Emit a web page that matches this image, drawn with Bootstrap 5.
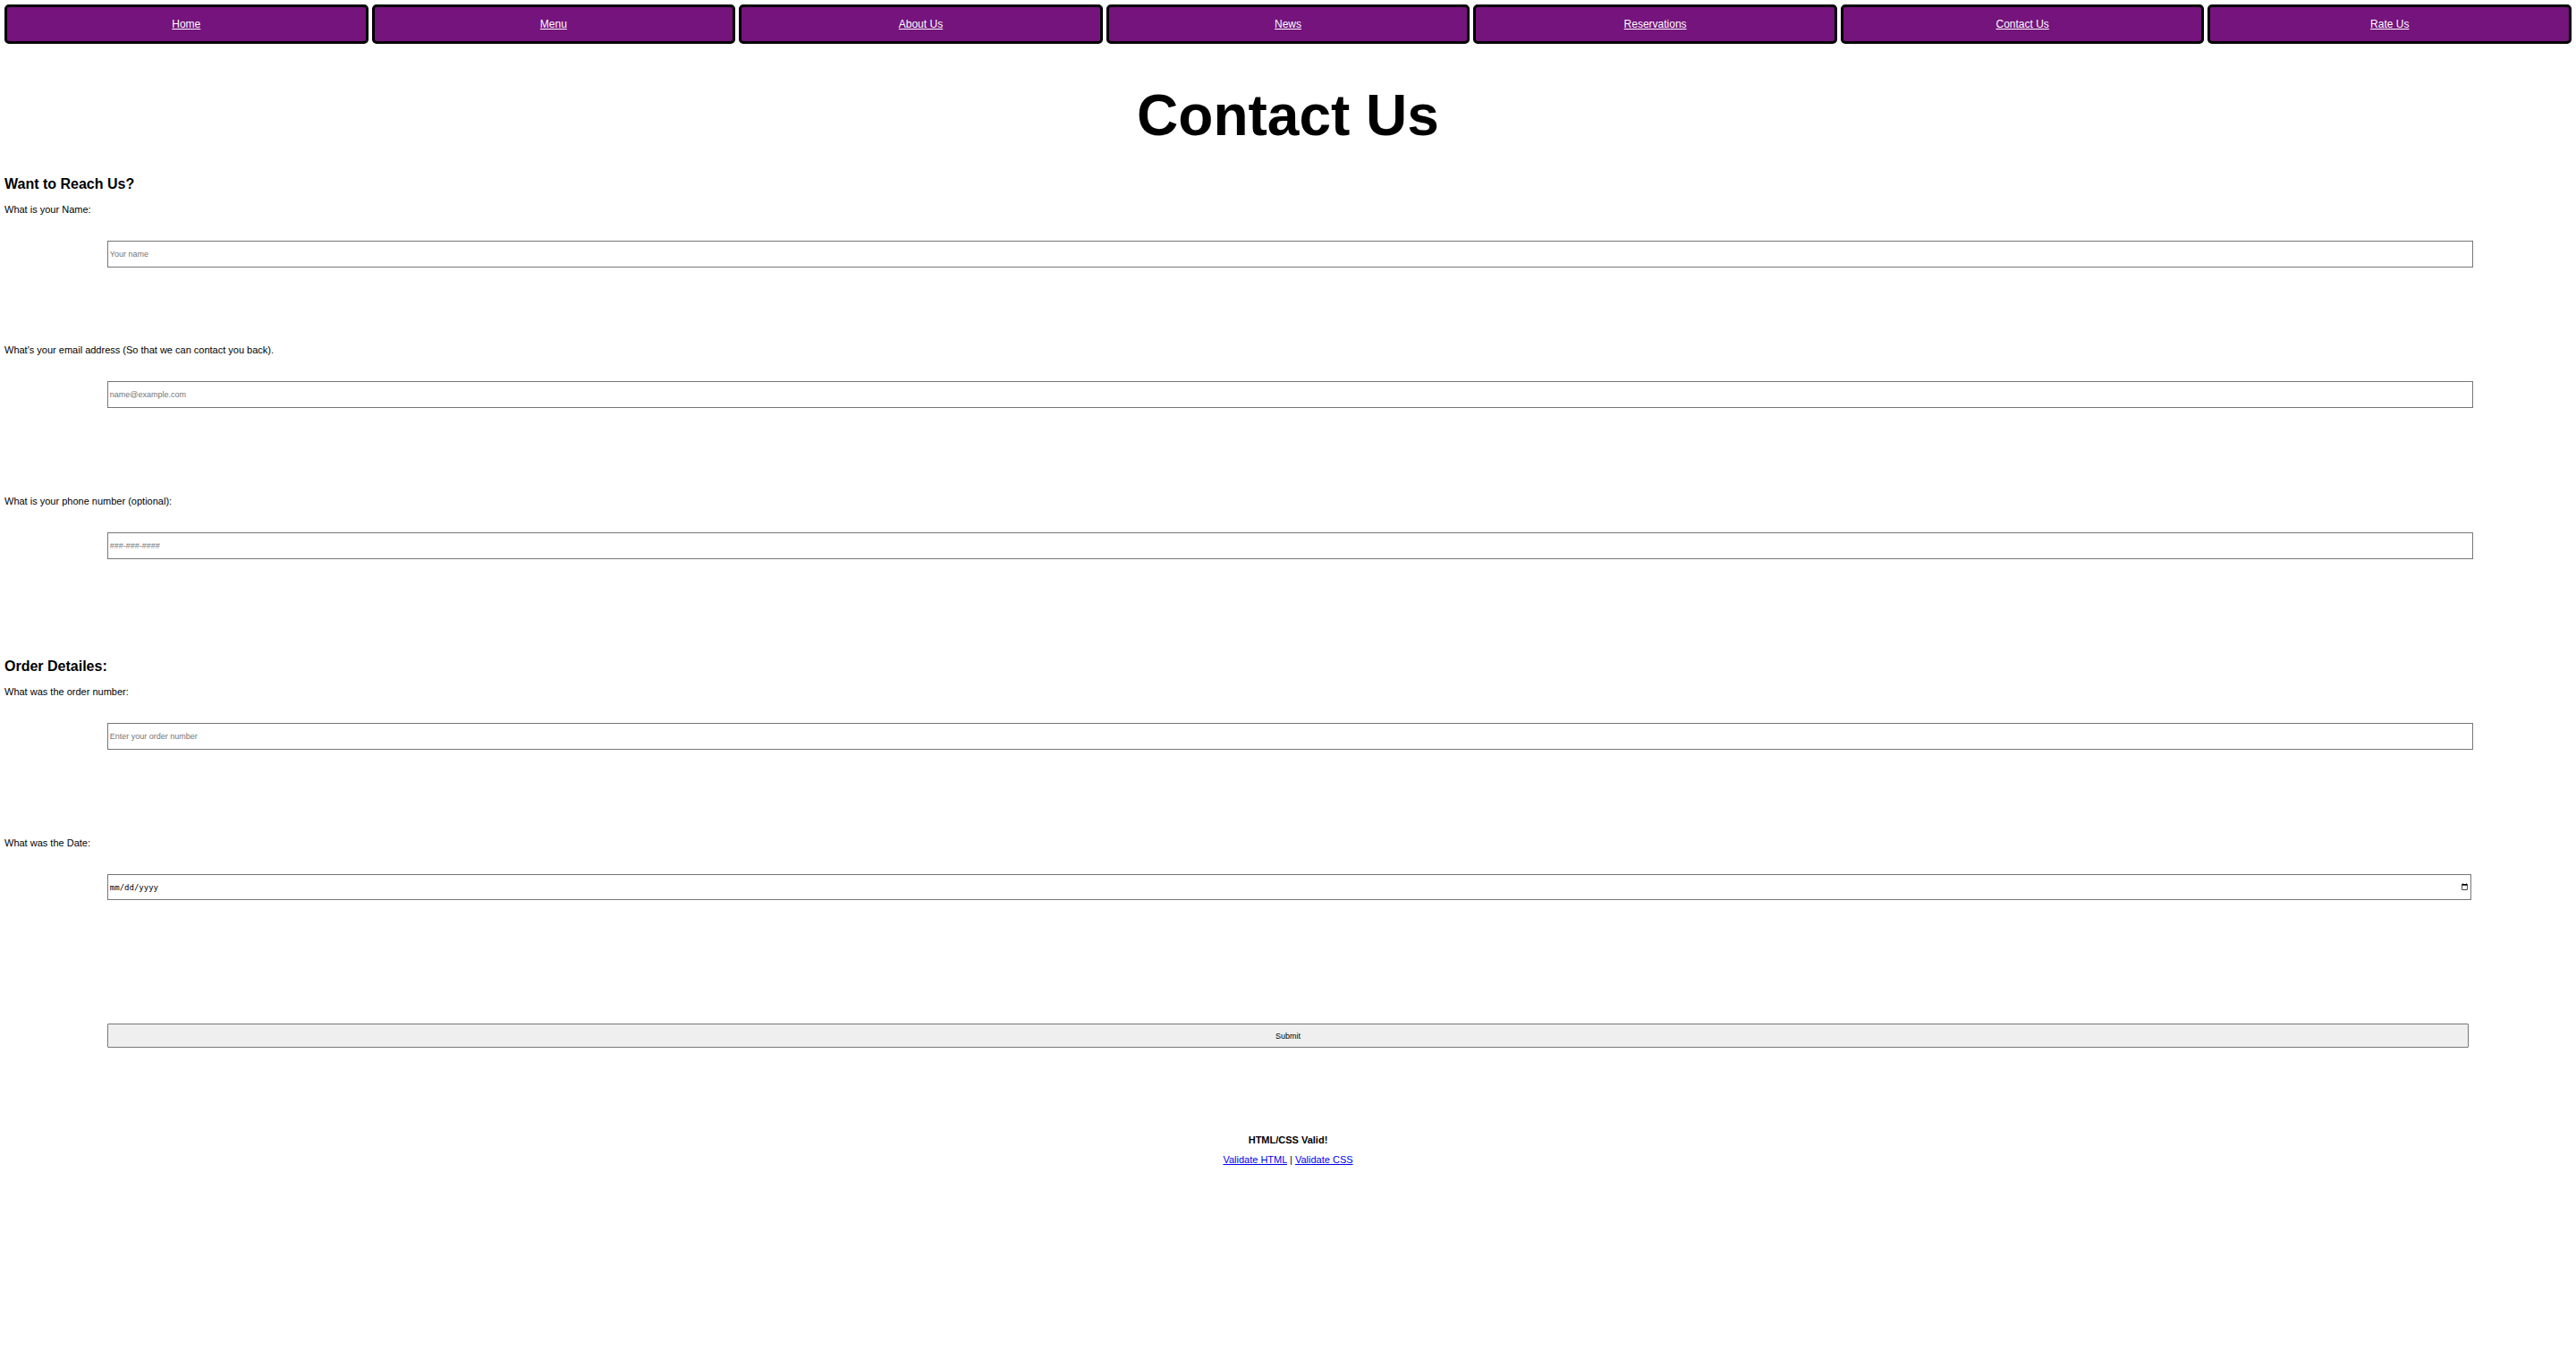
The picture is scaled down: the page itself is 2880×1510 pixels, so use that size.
<!DOCTYPE html>
<html lang="en">
<head>
<meta charset="utf-8">
<meta name="viewport" content="width=device-width, initial-scale=1">
<title>Contact Us</title>
<link href="https://cdn.jsdelivr.net/npm/bootstrap@5.3.0/dist/css/bootstrap.min.css" rel="stylesheet">
<style>
  body { font-family: "Liberation Sans", Arial, sans-serif; font-size: 11px; line-height: 12px; color: #000; background: #fff; padding: 5px; }
  .site-nav { gap: 4px; }
  .site-nav .nav-link { height: 44px; padding: 0; border: 3px solid #000; border-radius: 5px; background: #75147c; color: #fff; font-size: 12px; text-decoration: underline; }
  .page-title { font-size: 64px; line-height: 72px; font-weight: 700; margin: 44px 0 31px; }
  .section-title { font-size: 16px; line-height: 20px; font-weight: 700; margin: 0 0 12px; }
  .field { margin-bottom: 98px; }
  .field-name { margin-bottom: 86px; }
  .field-phone { margin-bottom: 110px; }
  .field-date { margin-bottom: 138px; }
  .field label { display: block; margin-bottom: 29px; }
  .entry { display: block; box-sizing: content-box; width: 92%; height: 28px; margin-left: 4%; padding: 0 1px 0 2px; border: 1px solid #767676; border-radius: 0; background: #fff; color: #000; font-size: 9px; line-height: 12px; }
  .entry::placeholder { color: #757575; opacity: 1; }
  .entry-date { height: 27px; padding: 0 0 0 1px; font-family: "DejaVu Sans Mono", monospace; }
  .entry-date::-webkit-datetime-edit-fields-wrapper { padding: 1px; }
  .send { display: block; width: 92%; height: 27px; margin: 0 0 97px 4%; padding: 0; border: 1px solid #767676; border-radius: 1px; background: #efefef; color: #000; font-size: 9px; line-height: 12px; }
  .site-foot p { margin: 0 0 10px; }
  .site-foot a { color: #0000ee; }
</style>
<script src="https://cdn.jsdelivr.net/npm/bootstrap@5.3.0/dist/js/bootstrap.bundle.min.js" defer></script>
</head>
<body>
<nav class="site-nav nav nav-fill flex-nowrap" aria-label="Main">
  <a class="nav-link flex-fill d-flex align-items-center justify-content-center w-100" href="#">Home</a>
  <a class="nav-link flex-fill d-flex align-items-center justify-content-center w-100" href="#">Menu</a>
  <a class="nav-link flex-fill d-flex align-items-center justify-content-center w-100" href="#">About Us</a>
  <a class="nav-link flex-fill d-flex align-items-center justify-content-center w-100" href="#">News</a>
  <a class="nav-link flex-fill d-flex align-items-center justify-content-center w-100" href="#">Reservations</a>
  <a class="nav-link flex-fill d-flex align-items-center justify-content-center w-100" href="#">Contact Us</a>
  <a class="nav-link flex-fill d-flex align-items-center justify-content-center w-100" href="#">Rate Us</a>
</nav>
<main>
  <h1 class="page-title text-center">Contact Us</h1>
  <form>
    <h2 class="section-title">Want to Reach Us?</h2>
    <div class="field field-name">
      <label for="name">What is your Name:</label>
      <input class="entry" type="text" id="name" placeholder="Your name">
    </div>
    <div class="field">
      <label for="email">What's your email address (So that we can contact you back).</label>
      <input class="entry" type="email" id="email" placeholder="name@example.com">
    </div>
    <div class="field field-phone">
      <label for="phone">What is your phone number (optional):</label>
      <input class="entry" type="tel" id="phone" placeholder="###-###-####">
    </div>
    <h2 class="section-title">Order Detailes:</h2>
    <div class="field">
      <label for="order">What was the order number:</label>
      <input class="entry" type="text" id="order" placeholder="Enter your order number">
    </div>
    <div class="field field-date">
      <label for="date">What was the Date:</label>
      <input class="entry entry-date" type="date" id="date">
    </div>
    <button class="send" type="submit">Submit</button>
  </form>
</main>
<footer class="site-foot text-center">
  <p class="fw-bold">HTML/CSS Valid!</p>
  <p><a href="#">Validate HTML</a> | <a href="#">Validate CSS</a></p>
</footer>
</body>
</html>
